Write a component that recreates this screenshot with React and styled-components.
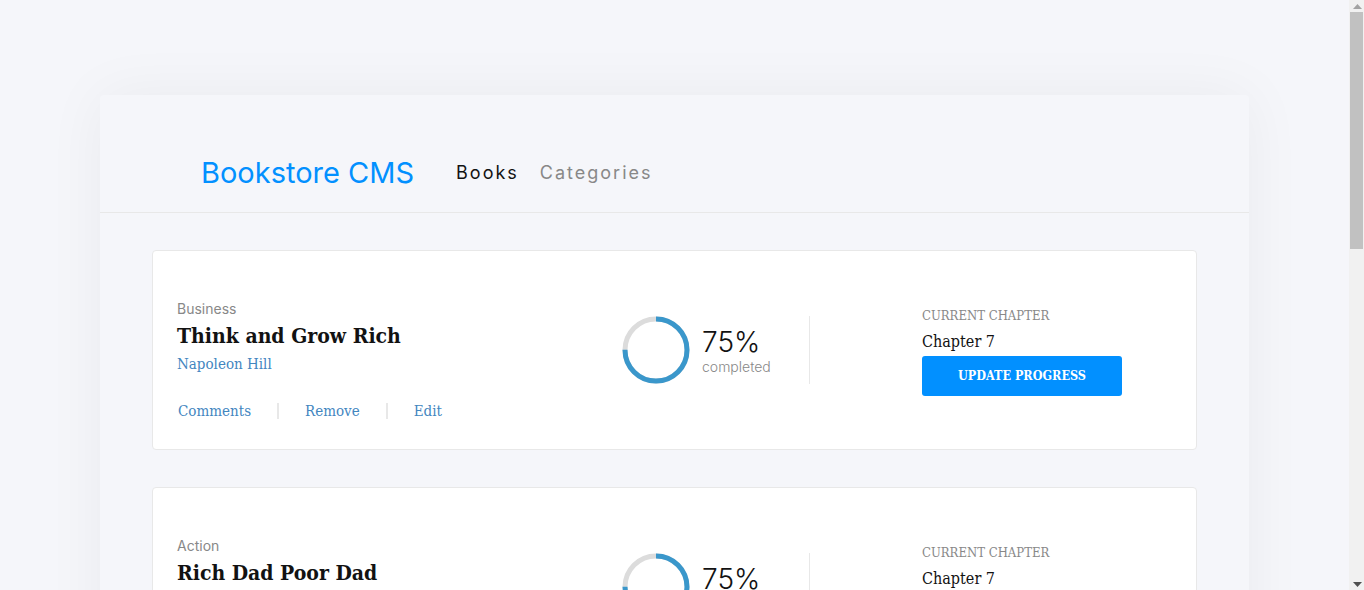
import React from 'react';
import styled, { createGlobalStyle } from 'styled-components';

const books = [
  {
    id: 1,
    category: 'Business',
    title: 'Think and Grow Rich',
    author: 'Napoleon Hill',
    progress: 75,
    chapter: 'Chapter 7',
  },
  {
    id: 2,
    category: 'Action',
    title: 'Rich Dad Poor Dad',
    author: 'Robert Kiyosaki',
    progress: 75,
    chapter: 'Chapter 7',
  },
  {
    id: 3,
    category: 'Science Fiction',
    title: 'Dune',
    author: 'Frank Herbert',
    progress: 8,
    chapter: 'Chapter 3: "A Lesson Learned"',
  },
];

const SANS = '"Inter", "Open Sans", sans-serif';
const SLAB = '"DejaVu Serif Condensed", "DejaVu Serif", serif';

function ProgressRing({ value }) {
  const r = 31;
  const c = 2 * Math.PI * r;
  return (
    <Ring width="68" height="68" viewBox="0 0 68 68">
      <circle cx="34" cy="34" r={r} fill="none" stroke="#dcdcdc" strokeWidth="5" />
      <circle
        cx="34"
        cy="34"
        r={r}
        fill="none"
        stroke="#3a97cb"
        strokeWidth="5"
        strokeDasharray={`${(c * value) / 100} ${c}`}
        transform="rotate(-90 34 34)"
      />
    </Ring>
  );
}

function BookCard({ book }) {
  return (
    <Card>
      <Info>
        <Category>{book.category}</Category>
        <Title>{book.title}</Title>
        <Author>{book.author}</Author>
        <Actions>
          <ActionButton>Comments</ActionButton>
          <ActionDivider />
          <ActionButton>Remove</ActionButton>
          <ActionDivider />
          <ActionButton>Edit</ActionButton>
        </Actions>
      </Info>
      <Progress>
        <ProgressRing value={book.progress} />
        <Percent>
          <PercentValue>{book.progress}%</PercentValue>
          <PercentLabel>completed</PercentLabel>
        </Percent>
      </Progress>
      <ChapterBox>
        <ChapterLabel>Current Chapter</ChapterLabel>
        <ChapterName>{book.chapter}</ChapterName>
        <UpdateButton>Update progress</UpdateButton>
      </ChapterBox>
    </Card>
  );
}

// headless page shows no scrollbar, so draw the classic one
function FakeScrollbar() {
  return (
    <ScrollTrack>
      <ScrollArrow>
        <svg width="9" height="5" viewBox="0 0 9 5">
          <path d="M0 5 L4.5 0 L9 5 Z" fill="#a3a3a3" />
        </svg>
      </ScrollArrow>
      <ScrollThumb />
      <ScrollArrow down>
        <svg width="9" height="5" viewBox="0 0 9 5">
          <path d="M0 0 L4.5 5 L9 0 Z" fill="#505050" />
        </svg>
      </ScrollArrow>
    </ScrollTrack>
  );
}

export default function App() {
  return (
    <>
      <GlobalStyle />
      <Panel>
        <Header>
          <Logo>Bookstore CMS</Logo>
          <Nav>
            <NavLink active>Books</NavLink>
            <NavLink>Categories</NavLink>
          </Nav>
        </Header>
        <BookList>
          {books.map(book => (
            <BookCard key={book.id} book={book} />
          ))}
        </BookList>
      </Panel>
      <FakeScrollbar />
    </>
  );
}

const GlobalStyle = createGlobalStyle`
  body {
    margin: 0;
    padding-right: 15px;
    background: #f5f6fa;
    font-family: ${SANS};
  }
  * {
    box-sizing: border-box;
  }
`;

const ScrollTrack = styled.div`
  position: fixed;
  top: 0;
  right: 0;
  bottom: 0;
  width: 15px;
  display: flex;
  flex-direction: column;
  background: #f1f1f1;
  z-index: 10;
`;

const ScrollArrow = styled.div`
  display: flex;
  align-items: center;
  justify-content: center;
  flex-shrink: 0;
  height: 12px;
  margin-top: ${props => (props.down ? 'auto' : '0')};
  padding-left: 1px;
`;

const ScrollThumb = styled.div`
  width: 13px;
  height: 237px;
  margin-left: 1px;
  background: #c1c1c1;
`;

const Panel = styled.div`
  margin: 95px 100px 60px;
  background: #f5f6fa;
  border-radius: 4px;
  box-shadow: 0 0 60px rgba(0, 0, 0, 0.05);
  padding-bottom: 40px;
`;

const Header = styled.header`
  display: flex;
  align-items: center;
  height: 118px;
  padding: 38px 0 0 101px;
  border-bottom: 1px solid #e8e8e8;
`;

const Logo = styled.h1`
  margin: 0;
  font-family: ${SANS};
  font-size: 29px;
  font-weight: 400;
  color: #0290ff;
`;

const Nav = styled.nav`
  display: flex;
  gap: 21px;
  margin-left: 42px;
`;

const NavLink = styled.a`
  font-family: ${SANS};
  font-size: 18px;
  letter-spacing: 2px;
  color: ${props => (props.active ? '#121212' : '#888')};
  cursor: pointer;
`;

const BookList = styled.div`
  display: flex;
  flex-direction: column;
  gap: 37px;
  padding: 37px 52px 0;
`;

const Card = styled.div`
  display: flex;
  align-items: center;
  height: 200px;
  padding: 0 74px 0 24px;
  background: #fff;
  border: 1px solid #e8e8e8;
  border-radius: 4px;
`;

const Info = styled.div`
  flex: 1;
  display: flex;
  flex-direction: column;
  align-self: stretch;
  padding-top: 49px;
`;

const Category = styled.span`
  font-family: ${SANS};
  font-size: 14px;
  line-height: 17px;
  color: #888;
`;

const Title = styled.h2`
  margin: 5px 0 0;
  font-family: ${SLAB};
  font-size: 21px;
  line-height: 27px;
  font-weight: 700;
  color: #121212;
`;

const Author = styled.span`
  margin-top: 6px;
  font-family: ${SLAB};
  font-size: 15px;
  line-height: 18px;
  font-weight: 300;
  color: #4386bf;
`;

const Actions = styled.div`
  display: flex;
  align-items: center;
  margin-top: 29px;
  padding-left: 1px;
`;

const ActionButton = styled.button`
  padding: 0;
  border: none;
  background: none;
  font-family: ${SLAB};
  font-size: 15px;
  line-height: 18px;
  font-weight: 300;
  color: #4386bf;
  cursor: pointer;
`;

const ActionDivider = styled.span`
  width: 2px;
  height: 16px;
  margin: 0 26px;
  background: #e8e8e8;
`;

const Progress = styled.div`
  display: flex;
  align-items: center;
  width: 188px;
  height: 68px;
  border-right: 1px solid #e8e8e8;
`;

const Ring = styled.svg`
  flex-shrink: 0;
`;

const Percent = styled.div`
  display: flex;
  flex-direction: column;
  margin-left: 12px;
`;

const PercentValue = styled.span`
  font-family: ${SANS};
  font-size: 28px;
  line-height: 32px;
  font-weight: 300;
  color: #121212;
`;

const PercentLabel = styled.span`
  font-family: ${SANS};
  font-size: 14px;
  line-height: 17px;
  font-weight: 300;
  color: #888;
`;

const ChapterBox = styled.div`
  display: flex;
  flex-direction: column;
  width: 200px;
  margin-left: 112px;
  padding-top: 3px;
`;

const ChapterLabel = styled.span`
  font-family: ${SLAB};
  font-size: 13px;
  line-height: 16px;
  font-weight: 300;
  text-transform: uppercase;
  color: #888;
`;

const ChapterName = styled.span`
  margin-top: 8px;
  font-family: ${SLAB};
  font-size: 16px;
  line-height: 20px;
  font-weight: 300;
  color: #121212;
`;

const UpdateButton = styled.button`
  width: 200px;
  height: 40px;
  margin-top: 4px;
  padding: 0;
  border: none;
  border-radius: 3px;
  background: #0290ff;
  font-family: ${SLAB};
  font-size: 12.5px;
  font-weight: 700;
  letter-spacing: 0;
  text-transform: uppercase;
  color: #fff;
  cursor: pointer;
`;
